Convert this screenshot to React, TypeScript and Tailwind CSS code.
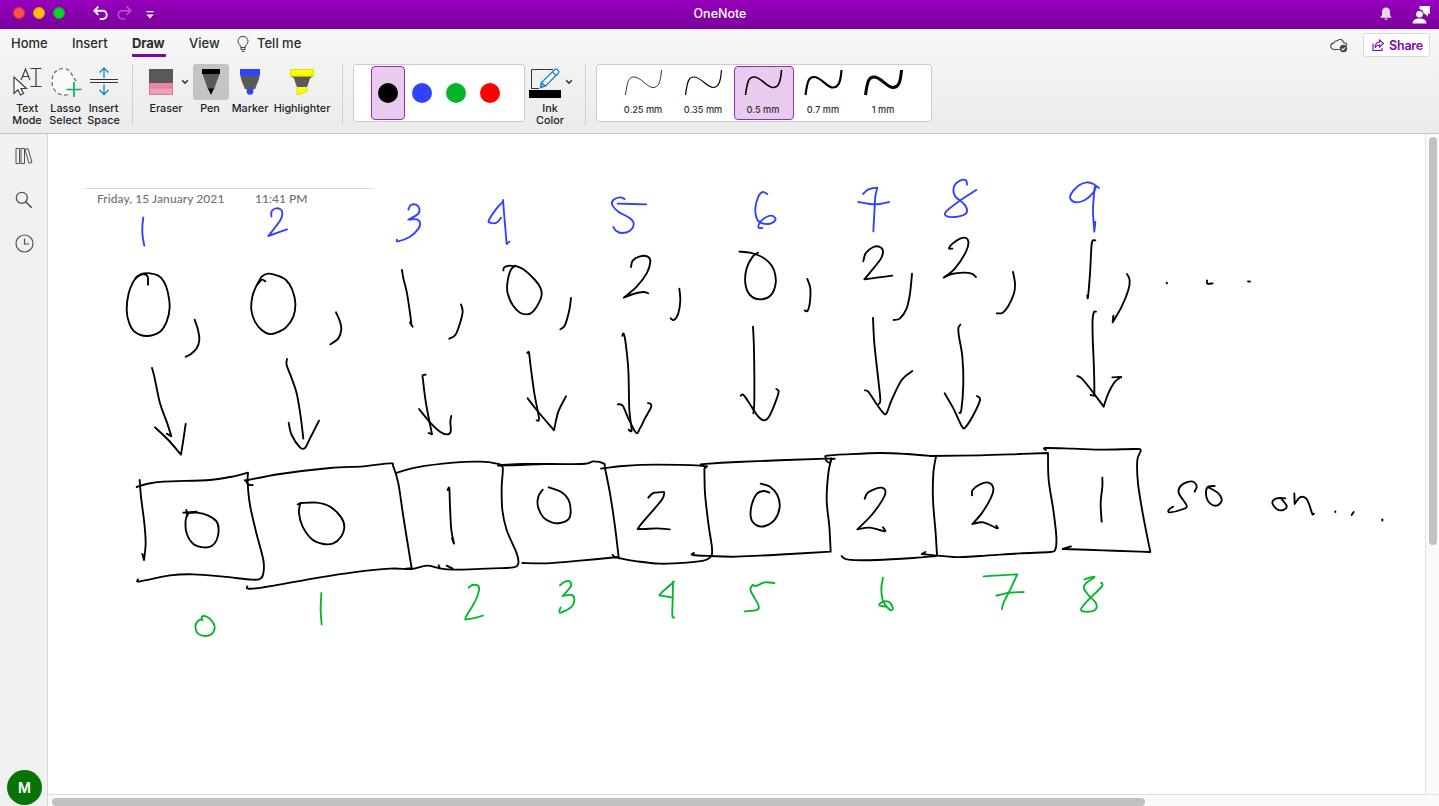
import type { ReactNode } from "react";

type Stroke = [x: number, y: number][];

const parse = (s: string): Stroke =>
  s.trim().split(/\s+/).map((p) => p.split(",").map(Number) as [number, number]);

/** Turns sampled pen positions into a smooth curve; a repeated point makes a corner. */
function smooth(points: Stroke): string {
  let d = `M${points[0]}`;
  for (let i = 0; i < points.length - 1; i++) {
    const p1 = points[i];
    const p2 = points[i + 1];
    if (p1[0] === p2[0] && p1[1] === p2[1]) continue;
    const p0 = points[i - 1] ?? p1;
    const p3 = points[i + 2] ?? p2;
    d += `C${p1[0] + (p2[0] - p0[0]) / 6},${p1[1] + (p2[1] - p0[1]) / 6} ${p2[0] - (p3[0] - p1[0]) / 6},${
      p2[1] - (p3[1] - p1[1]) / 6
    } ${p2[0]},${p2[1]}`;
  }
  return d;
}

const BLACK = "#000000";
const BLUE = "#2f43ff";
const GREEN = "#06b52c";

// Pen samples are stored at three units per pixel, relative to the group's origin.
const ink: { x: number; y: number; color: string; strokes: string[] }[] = [
  {
    x: 0, y: 130, color: BLUE,
    strokes: [
      "430,262 427,290 428,320 433,347",
      "814,259 815,244 828,235 843,239 847,252 840,272 805,318 805,318 861,298",
    ],
  },
  {
    x: 0, y: 130, color: BLACK,
    strokes: [
      "444,464 443,440 432,432 416,437 406,445",
      "407,445 425,432 450,430 475,437 492,455 503,485 509,532 500,575 480,605 440,618 405,606 388,580 380,540 386,490 400,455 415,438",
      "584,569 594,600 598,630 590,655 572,673 557,680",
      "796,454 786,449 772,464",
      "776,458 785,440 805,431 830,436 858,450 877,480 886,520 880,560 858,592 830,608 808,612 785,600 765,575 754,540 757,500 768,470 780,448",
    ],
  },
  {
    x: 320, y: 170, color: BLUE,
    strokes: [
      "265,119 272,106 288,104 298,116 294,132 265,149 265,149 290,148 300,158 296,175 270,200 234,214 231,209",
      "549,95 530,115 507,150 510,158 530,158 543,143",
      "549,90 553,140 560,222 560,222 568,215",
      "914,87 900,82 880,90 877,105 895,125 930,145 941,162 930,182 905,189 888,182 880,171",
      "893,101 979,103",
    ],
  },
  {
    x: 320, y: 170, color: BLACK,
    strokes: [
      "48,427 60,455 64,478 55,505 31,523",
      "246,300 250,325 260,365 268,415 274,462 270,457 278,470",
      "423,403 428,425 420,460 406,495 388,506",
      "550,301 553,292 570,287 584,290",
      "584,287 610,298 645,330 662,355 664,380 650,410 635,428 620,433 600,428 578,405 563,370 562,340 570,305 582,288",
      "753,384 748,420 735,465 721,478",
      "933,291 938,272 960,259 983,260 991,275 980,310 950,350 911,383 911,383 940,372 970,366 985,370",
      "1078,356 1081,390 1075,430 1062,450 1052,445",
      "317,614 308,616 309,630 318,700 336,793 336,793 326,789",
      "297,717 330,757 360,785 380,793 392,785 391,755 394,738",
      "622,549 627,548 632,590 643,670 657,745 650,751",
      "623,685 650,720 702,781 702,781 715,725 738,679",
      "907,497 911,491 917,520 925,600 928,720 935,780 926,779",
      "893,703 908,707 925,745 948,788 960,775 975,745 993,712 992,702 984,699",
    ],
  },
  {
    x: 700, y: 170, color: BLUE,
    strokes: [
      "202,72 188,66 175,80 166,115 170,145 182,158 205,162 222,155 226,145 212,137 190,147 178,160 176,173 187,174",
      "489,72 505,58 532,53 532,53 526,80 523,130 520,184",
      "475,96 510,102 540,102 567,96",
      "801,44 798,31 780,32 762,50 765,78 790,100 801,118 795,133 765,141 739,138 738,125 775,95 829,60",
    ],
  },
  {
    x: 700, y: 170, color: BLACK,
    strokes: [
      "118,245 150,248 180,258 205,275 222,300 227,340 212,376 180,388 150,375 136,340 140,295 158,260 174,248",
      "322,327 331,355 330,395 323,422 314,421",
      "490,274 497,250 520,231 540,231 549,245 540,270 493,328 493,328 530,323 577,317",
      "636,311 630,370 620,415 600,445 581,450",
      "757,236 747,234 765,215 792,203 805,215 798,245 765,295 731,323 731,323 755,312 790,308 815,311 828,321",
      "159,470 162,540 163,690 160,730",
      "122,677 130,674 145,695 175,740 192,751 207,740 225,700 236,665 229,657",
      "519,444 523,520 535,630 541,690 536,702",
      "495,661 505,665 525,695 550,729 560,729 575,690 605,630 637,603",
      "781,464 775,475 777,500 787,560 790,640 784,720 778,728",
      "734,670 760,715 785,768 796,772 820,735 840,690 831,678",
    ],
  },
  {
    x: 1000, y: 170, color: BLUE,
    strokes: [
      "297,54 280,42 260,37 235,47 213,72 212,88 228,97 255,90 280,68 288,50",
      "284,50 279,120 283,185 283,185 286,156",
    ],
  },
  {
    x: 1000, y: 170, color: BLACK,
    strokes: [
      "39,306 45,340 42,370 25,408 8,428 -10,430",
      "286,211 277,213 274,235 270,310 264,381 262,376",
      "381,312 389,330 385,360 365,410 338,457 338,457 340,437",
      "500,338 501,340",
      "621,331 622,341 638,340",
      "744,334 750,335",
      "288,425 282,426 278,445 278,500 282,600 283,670 280,676 272,675",
      "232,618 245,625 270,655 311,710 311,710 325,670 345,635 364,621 364,621 337,622",
    ],
  },
  {
    x: 120, y: 350, color: BLACK,
    strokes: [
      "96,54 103,80 120,160 140,215 154,259 154,259 140,251",
      "105,232 145,270 183,314 183,314 190,270 197,222",
      "501,27 500,45 515,85 530,130 542,200 550,266",
      "506,218 515,255 540,292 555,294 570,265 597,212",
      "59,390 63,440 73,520 77,580 72,630 72,630 67,612",
      "50,411 80,402 130,395 270,390 330,381 384,368 384,368 383,400 390,465 408,545 430,630 430,670 420,687 395,689 310,680 220,673 150,676 90,688 54,695 54,688",
      "398,405 387,404 377,391 385,390 480,372 630,354 730,349 810,340 820,350 835,400 850,500 875,655 875,655 858,656",
      "382,709 384,716 430,712 600,682 700,667 810,656 875,657 920,647 960,655 1000,659 1120,655 1180,652 1195,640 1190,610 1160,540 1147,480 1145,410 1148,352 1130,341 1080,335 1000,338 890,352 828,369",
      "956,646 959,655",
      "980,647 998,656",
      "190,488 230,485",
      "199,480 202,497",
      "199,490 230,488 265,497 290,515 296,540 290,570 275,588 250,592 220,582 200,550 197,510 205,490",
      "533,463 545,459",
      "541,459 590,458 630,470 662,500 673,530 662,562 640,580 610,582 575,567 548,530 537,490 540,462",
      "983,420 988,415 990,470 994,540 1002,580 996,565",
      "1134,347 1200,345 1275,342",
    ],
  },
  {
    x: 120, y: 350, color: GREEN,
    strokes: [
      "247,811 245,801 258,799 275,812 284,832 275,852 255,858 233,850 226,830 232,815 245,807",
      "604,729 602,780 605,823",
      "1046,713 1057,705 1074,707 1077,722 1065,755 1038,800 1042,808 1089,797",
    ],
  },
  {
    x: 490, y: 420, color: BLACK,
    strokes: [
      "28,136 100,132 275,132 310,124 342,131 345,145 360,220 375,320 386,412 386,412 375,412 368,405",
      "97,429 170,430 270,422 385,411",
      "333,146 400,138 500,134 640,138 643,150 645,220 655,310 666,385 662,410 640,422 590,428 510,431 440,424 385,414",
      "632,133 740,126 1010,116 1022,118",
      "1024,115 1015,160 1010,240 1018,320 1022,395 1022,395 900,402 740,410 660,408 608,405 612,399",
      "158,209 145,230 144,260 160,292 185,307 210,309 235,298 242,275 236,240 215,217 176,202",
      "475,233 490,219 522,216 522,216 515,240 449,318 452,327 500,325 539,328",
      "838,218 820,213 800,222 785,255 783,295 800,316 825,318 855,298 869,260 862,225 840,200 812,191",
    ],
  },
  {
    x: 490, y: 420, color: GREEN,
    strokes: [
      "210,496 225,485 240,485 242,500 218,528 218,528 245,525 253,540 245,560 215,577 208,575 212,562",
      "552,485 511,522 515,527 545,532",
      "549,485 548,540 547,588 553,592",
      "853,489 825,487 797,498 788,495 782,512 805,555 800,570 764,574",
    ],
  },
  {
    x: 820, y: 420, color: BLACK,
    strokes: [
      "34,118 30,128 20,123 17,113 22,107 80,103 180,99 260,102 348,109",
      "348,109 340,160 339,240 347,340 351,405",
      "65,408 85,419 170,420 280,414 348,408",
      "330,108 480,106 600,102 684,99 684,99 686,180 700,270 709,350 706,388 690,396 600,400 480,408 400,411 305,402 305,402 316,396",
      "678,90 678,84 760,86 850,89 945,87 962,92 952,120 954,190 970,290 991,396 991,396 960,395 850,391 728,387 728,387 753,379",
      "134,236 145,217 180,203 196,212 190,235 155,285 112,328 112,328 150,323 194,334 189,322",
      "456,226 458,210 480,193 505,188 520,205 512,235 485,280 457,312 457,312 490,307 531,325 529,317",
      "847,173 847,200 842,250 845,305",
    ],
  },
  {
    x: 820, y: 420, color: GREEN,
    strokes: [
      "189,473 184,505 188,540 200,560 214,571 218,562 205,545 185,547 178,556 198,560",
      "491,469 540,466 592,463 592,463 570,510 550,550 546,567",
      "529,527 570,518 611,516",
      "793,478 824,470 800,488 791,503 805,525 828,550 825,570 795,575 783,568 800,545 845,500 843,488",
    ],
  },
  {
    x: 1100, y: 440, color: BLACK,
    strokes: [
      "284,155 290,138 275,124 245,135 236,158 260,197 250,207 210,217 206,210 219,200",
      "344,138 322,142 319,170 330,190 350,197 365,182 355,160 326,142",
      "556,175 530,175 517,188 530,207 550,210 560,198 545,178",
      "583,160 584,192 584,192 600,172 618,175 628,195 637,222 642,221",
      "706,214 706,216",
      "761,216 755,225",
      "847,238 847,242",
    ],
  },
];

function InkCanvas() {
  return (
    <svg className="block h-full w-full" viewBox="48 134 1377 661" fill="none" strokeLinecap="round" strokeLinejoin="round">
      {ink.map((group, i) => (
        <g key={i} transform={`translate(${group.x} ${group.y}) scale(${1 / 3})`} stroke={group.color} strokeWidth={5.6}>
          {group.strokes.map((s, j) => (
            <path key={j} d={smooth(parse(s))} />
          ))}
        </g>
      ))}
    </svg>
  );
}

function Caret() {
  return (
    <svg className="h-1.5 w-2" viewBox="0 0 8 6" fill="none" stroke="#333" strokeWidth="1.6">
      <path d="M1.2 1.2 4 4.2 6.8 1.2" />
    </svg>
  );
}

function TitleBar() {
  return (
    <header className="flex h-[29px] shrink-0 items-center bg-gradient-to-b from-[#9600bc] to-[#7b009d] pl-[13px] pr-[8px] text-white">
      <div className="flex w-[665px] items-center pb-[3px]">
        <div className="flex gap-2">
          <span className="size-3 rounded-full border border-[#d93a35] bg-[#ff4f48]" />
          <span className="size-3 rounded-full border border-[#dd9f06] bg-[#ffbd06]" />
          <span className="size-3 rounded-full border border-[#0bab1c] bg-[#0cd02b]" />
        </div>
        <svg className="ml-7 h-4 w-[15px]" viewBox="0 0 15 16" fill="none" stroke="#fff" strokeWidth="1.9">
          <path d="M5.3 1.6 1.3 5.7l4 4.1M1.4 5.7h8.2a4 4 0 0 1 0 8.300H6.800" />
        </svg>
        <svg className="ml-[9px] h-4 w-[15px] opacity-35" viewBox="0 0 15 16" fill="none" stroke="#fff" strokeWidth="1.6">
          <path d="m9.700 1.600 4.100 4.100-4.100 4.100M13.600 5.700H5.400a4 4 0 0 0 0 8.300h2.800" />
        </svg>
        <svg className="ml-[14px] mt-[3px] h-2 w-2" viewBox="0 0 8 8" fill="#fff">
          <path d="M0.5 0h7v1.3h-7zM0.3 3.4h7.4L4 7.6z" />
        </svg>
      </div>
      <h1 className="w-[84px] pb-0.5 text-center text-[12.5px] font-medium leading-4">OneNote</h1>
      <div className="ml-auto flex items-center gap-[20px]">
        <svg className="mb-px h-[14px] w-3" viewBox="0 0 12 14" fill="#ecd4f4">
          <path d="M6 .5C3.5.5 2 2.2 2 4.7v3.4L.6 10v.7h10.800V10L10 8.100V4.700C10 2.200 8.500.500 6 .500zM4.500 11.400h3a1.500 1.500 0 0 1-3 0z" />
        </svg>
        <svg className="mb-px h-[19px] w-[19px]" viewBox="0 0 19 19" fill="#fff">
          <path d="M7.500 1H18v7.800h-2v3l-3-3h-1.400a4.500 4.500 0 0 0-4.100-4.500z" />
          <circle cx="7.500" cy="9.300" r="3.300" />
          <path d="M.6 18.500c0-3.300 2.600-5 6.900-5s6.900 1.700 6.900 5z" />
        </svg>
      </div>
    </header>
  );
}

function TabRow() {
  return (
    <nav className="flex h-[35px] items-start pl-[11px] pt-[5px] text-[13px] font-medium leading-[18px] text-[#2b2b2b]">
      <span className="w-[61px]">Home</span>
      <span className="w-[60px]">Insert</span>
      <span className="w-[57px]">
        <span className="inline-block h-[23px] w-[34px] whitespace-nowrap rounded-b-[1px] border-b-[3px] border-[#7d00a8] font-bold tracking-[-0.15px]">Draw</span>
      </span>
      <span className="w-[48px]">View</span>
      <svg className="mt-[2px] h-[16px] w-[12px]" viewBox="0 0 12 16" fill="none" stroke="#3c3c3c">
        <path d="M4 11.500c0-2.300-3-3-3-6.200a5 5 0 0 1 10 0c0 3.200-3 3.900-3 6.200zM4 11.500v2h4v-2M4.500 15.300h3" />
      </svg>
      <span className="ml-[8px] whitespace-nowrap">Tell me</span>
      <svg className="ml-auto mt-[4px] h-[15px] w-[18px]" viewBox="0 0 18 15" fill="none" stroke="#444" strokeWidth="1.1">
        <path d="M9.500 11.500H4.200a3.200 3.200 0 0 1-.4-6.400C4.600 2.800 6 2.500 7.300 2.800 8.500.9 12.800.6 13.500 4.500c2.200.1 3.300 1.400 3.400 3" />
        <circle cx="13.500" cy="10.500" r="3.700" fill="#444" stroke="none" />
        <path d="m11.700 10.500 1.300 1.300 2.400-2.400" stroke="#eee" />
      </svg>
      <button className="-mt-px ml-[15px] mr-[9px] flex h-6 w-[67px] items-center rounded-[3px] border border-[#dadada] bg-white pl-2 text-[12.5px] font-semibold text-[#8500ab]">
        <svg className="mr-[5px] h-3 w-3 shrink-0" viewBox="0 0 12 12" fill="none" stroke="#8500ab" strokeWidth="1.1">
          <path d="M1 4.500v7h9V9M7.500 1l4 3.500L7.500 8V6C5.500 6 4.200 6.800 3 8.700 3.200 5.300 5 3.200 7.500 3z" />
        </svg>
        <span className="pt-px tracking-[-0.2px]">Share</span>
      </button>
    </nav>
  );
}

function Tool({ className, icon, children }: { className: string; icon: ReactNode; children: ReactNode }) {
  return (
    <button className={`flex shrink-0 flex-col items-center text-[10.8px] font-medium leading-3 text-[#1c1c1c] ${className}`}>
      <span className="flex h-[39px] items-start justify-center">{icon}</span>
      <span className="whitespace-nowrap text-center">{children}</span>
    </button>
  );
}

function Divider({ className }: { className: string }) {
  return <span className={`h-[61px] w-px shrink-0 bg-[#cfcfcf] ${className}`} />;
}

const swatches = [
  { fill: "bg-black", on: true },
  { fill: "bg-[#2f43ff]", on: false },
  { fill: "bg-[#06b52c]", on: false },
  { fill: "bg-[#ff0000]", on: false },
];

const widths = [
  { label: "0.25 mm", w: 0.8, on: false },
  { label: "0.35 mm", w: 1.2, on: false },
  { label: "0.5 mm", w: 1.6, on: true },
  { label: "0.7 mm", w: 2.2, on: false },
  { label: "1 mm", w: 3, on: false },
];

function ToolRow() {
  return (
    <div className="flex items-start pl-2">
      <Tool
        className="w-[38px]"
        icon={
          <svg className="mt-[3px] h-[30px] w-[30px]" viewBox="0 0 30 30" fill="none" stroke="#3c3c3c" strokeWidth="1.2">
            <path d="M18.500 1.500h11M18.500 19.500h11M24 1.500v18" />
            <path d="m9 13 4.500-11 4.500 11M10.600 9.500h6" />
            <path d="M2 10v16.500l4-3.700 2.500 5.200 3-1.500-2.500-5h5.500z" fill="#fff" />
          </svg>
        }
      >
        Text<br />Mode
      </Tool>
      <Tool
        className="w-[39px]"
        icon={
          <svg className="mt-[3px] h-[30px] w-[32px]" viewBox="0 0 32 30" fill="none">
            <path d="M18 27.500C10 30 2 24 2 14.500S8 1.200 14 1.500c7 .5 8 8 13 14l-9 12z" fill="#fafafa" />
            <path d="M18 27.500C10 30 2 24 2 14.500S8 1.200 14 1.500c7 .5 8 8 13 14" stroke="#666" strokeWidth="1.2" strokeDasharray="4 2.5" />
            <path d="M16.500 22.500h15M24 15v15" stroke="#12ad4c" strokeWidth="1.7" />
          </svg>
        }
      >
        Lasso<br />Select
      </Tool>
      <Tool
        className="w-[37px]"
        icon={
          <svg className="mt-[3px] h-[30px] w-[28px]" viewBox="0 0 28 30" fill="none" strokeWidth="1.3">
            <path d="M0 12.500h28M0 15.500h28" stroke="#333" strokeWidth="1.2" />
            <path d="M14 11V1M9.500 5.500 14 1l4.500 4.500M14 17.500v10M9.500 23l4.500 4.500 4.500-4.500" stroke="#1783c9" />
          </svg>
        }
      >
        Insert<br />Space
      </Tool>
      <Divider className="ml-[10px]" />
      <Tool
        className="ml-[10px] w-[46px]"
        icon={
          <svg className="mr-[10px] mt-[5px] h-[27px] w-6" viewBox="0 0 24 27">
            <path d="M0 0h24v14H0z" fill="#595959" />
            <path d="M0 14h24v5H0z" fill="#e987a3" />
            <path d="M0 19h24v7H0z" fill="#f0a0b5" />
            <path d="M.5 14v11.500h23V14M.5 19h23" fill="none" stroke="#d47d93" />
          </svg>
        }
      >
        Eraser
      </Tool>
      <span className="-ml-2 mt-[15px] h-4 w-3"><Caret /></span>
      <Tool
        className="w-[36px]"
        icon={
          <span className="flex h-9 w-9 items-start justify-center rounded-[3px] bg-[#c4c4c4] pt-[5px]">
            <svg className="h-[26px] w-[18px]" viewBox="0 0 18 26">
              <path d="M0 0h18v5H0z" />
              <path d="M.5 5h17l-5.500 15.500H6z" fill="#595959" />
              <path d="M6 19.500h6L9 26z" />
            </svg>
          </span>
        }
      >
        <span className="mr-0.5">Pen</span>
      </Tool>
      <Tool
        className="w-[42px]"
        icon={
          <svg className="mt-[5px] h-[26px] w-5" viewBox="0 0 20 26">
            <path d="M6.700 19h6.600v3.500a3.300 3.300 0 0 1-6.600 0z" fill="#2f43ff" />
            <path d="M.5 6h19c0 5-2.500 8-4.300 14H4.800C3 14 .5 11 .5 6z" fill="#595959" />
            <path d="M0 0h20v6.500H0z" fill="#2f43ff" />
          </svg>
        }
      >
        Marker
      </Tool>
      <Tool
        className="w-[62px]"
        icon={
          <svg className="mt-[5px] h-[27px] w-6" viewBox="0 0 24 27">
            <path d="M.5 7h23l-3.700 2.500c-.6 3-1.300 5-2.800 8.500H7C5.500 14.500 4.800 12.500 4.200 9.500z" fill="#595959" />
            <path d="M0 0h24v7.500H0z" fill="#ffff00" />
            <path d="M7 18h10v5L7 26.500z" fill="#ffff00" />
            <path d="M.5.5h23v6.500H.5zM7 18v8l10-3.500V18" fill="none" stroke="#c9c900" strokeWidth=".6" />
          </svg>
        }
      >
        Highlighter
      </Tool>
      <Divider className="ml-[9px]" />
      <div className="ml-[10px] flex h-[58px] w-[172px] shrink-0 rounded-[3px] border border-[#cbcbcb] bg-white pl-[17px] pt-px">
        {swatches.map((s) => (
          <button
            key={s.fill}
            className={`flex h-[54px] w-[34px] items-center justify-center rounded-[4px] border ${
              s.on ? "border-[#9a2abb] bg-[#e8cbef]" : "border-transparent"
            }`}
          >
            <span className={`size-5 rounded-full ${s.fill}`} />
          </button>
        ))}
      </div>
      <Tool
        className="ml-1 w-[42px]"
        icon={
          <svg className="mr-2.5 mt-[3px] h-[31px] w-8" viewBox="0 0 32 31" fill="none">
            <path d="M24 2.500H2.500v19H10" stroke="#333" />
            <path d="M0 23h32v8H0z" fill="#000" />
            <path d="m11.500 20.500 1-5L26 2.500c1.500-1.500 5 1.500 3.500 3.500L16.500 19z" fill="#fff" stroke="#1783c9" strokeWidth="1.3" />
            <path d="m11.500 20.500 1-5 4 3.500zM23.500 5l3.500 3.500" fill="#7cbce4" stroke="#1783c9" strokeWidth="1.2" />
          </svg>
        }
      >
        Ink<br />Color
      </Tool>
      <span className="-ml-[6px] mt-[15px] h-4 w-3 shrink-0"><Caret /></span>
      <Divider className="ml-[8px]" />
      <div className="ml-[10px] flex h-[58px] w-[336px] shrink-0 rounded-[3px] border border-[#cbcbcb] bg-white pl-[17px] pt-px">
        {widths.map((o) => (
          <button
            key={o.label}
            className={`flex h-[54px] w-[60px] flex-col items-center rounded-[4px] border pr-[2px] text-[9.2px] font-medium leading-3 text-[#333] ${
              o.on ? "border-[#9a2abb] bg-[#e8cbef]" : "border-transparent"
            }`}
          >
            <svg className="h-[30px] w-[42px]" viewBox="0 0 42 30" fill="none" stroke="#000" strokeWidth={o.w}>
              <path d="M3.500 28C5.500 13 7 10 12 10c7 0 13 10.500 19 10.500 5 0 7.500-4 8.500-17.500" />
            </svg>
            <span className="mt-[7px] whitespace-nowrap">{o.label}</span>
          </button>
        ))}
      </div>
    </div>
  );
}

function Sidebar() {
  return (
    <aside className="flex w-12 shrink-0 flex-col items-center border-r border-[#d8d8d8] bg-[#f1f1f1] pb-px pl-px pt-[13px]">
      <svg className="h-[18px] w-[18px]" viewBox="0 0 18 18" fill="none" stroke="#505050">
        <path d="M1 1.500h3.500v15H1zM6 1.500h3.500v15H6zM10 2.500l3-.9 4 13.800-3 .9z" />
      </svg>
      <svg className="mt-[26px] h-[18px] w-[18px]" viewBox="0 0 18 18" fill="none" stroke="#505050" strokeWidth="1.3">
        <circle cx="6.8" cy="6.8" r="5.500" />
        <path d="m10.700 10.700 6 6" strokeWidth="1.6" />
      </svg>
      <svg className="mt-[25px] h-[19px] w-[19px]" viewBox="0 0 19 19" fill="none" stroke="#505050" strokeWidth="1.2">
        <circle cx="9.500" cy="9.500" r="8.500" />
        <path d="M9.500 4.500v5.500h4.500" />
      </svg>
      <div className="-mr-px mt-auto flex size-[35px] items-center justify-center rounded-full bg-[#057305] text-[14px] font-semibold text-white">M</div>
    </aside>
  );
}

export default function App() {
  return (
    <div className="flex h-[806px] w-[1439px] flex-col overflow-hidden bg-white font-['Inter',sans-serif]">
      <TitleBar />
      <div className="h-[105px] shrink-0 border-b border-[#c6c6c6] bg-gradient-to-b from-[#f7f7f7] to-[#ebebeb]">
        <TabRow />
        <ToolRow />
      </div>
      <div className="flex min-h-0 flex-1">
        <Sidebar />
        <div className="flex min-w-0 flex-1 flex-col">
          <div className="flex min-h-0 flex-1">
            <main className="relative h-[661px] w-[1377px] shrink-0">
              <div className="pl-[37px] pt-[54px] font-['Lato',sans-serif] text-[12px] font-medium leading-4 text-[#707070]">
                <div className="flex w-[288px] border-t border-[#dadada] pl-3 pt-[2px]">
                  <span className="w-[158px] whitespace-nowrap tracking-[0.07px]">Friday, 15 January 2021</span>
                  <span className="whitespace-nowrap">11:41 PM</span>
                </div>
              </div>
              <div className="absolute inset-0">
                <InkCanvas />
              </div>
            </main>
            <div className="flex-1 border-l border-[#e0e0e0] bg-[#fafafa] pl-[3px] pt-[3px]">
              <div className="h-[408px] w-2 rounded-full bg-[#c1c1c1]" />
            </div>
          </div>
          <div className="h-[12px] shrink-0 border-t border-[#e0e0e0] bg-[#fafafa] pl-1 pt-[3px]">
            <div className="h-2 w-[1093px] rounded-full bg-[#c1c1c1]" />
          </div>
        </div>
      </div>
    </div>
  );
}
